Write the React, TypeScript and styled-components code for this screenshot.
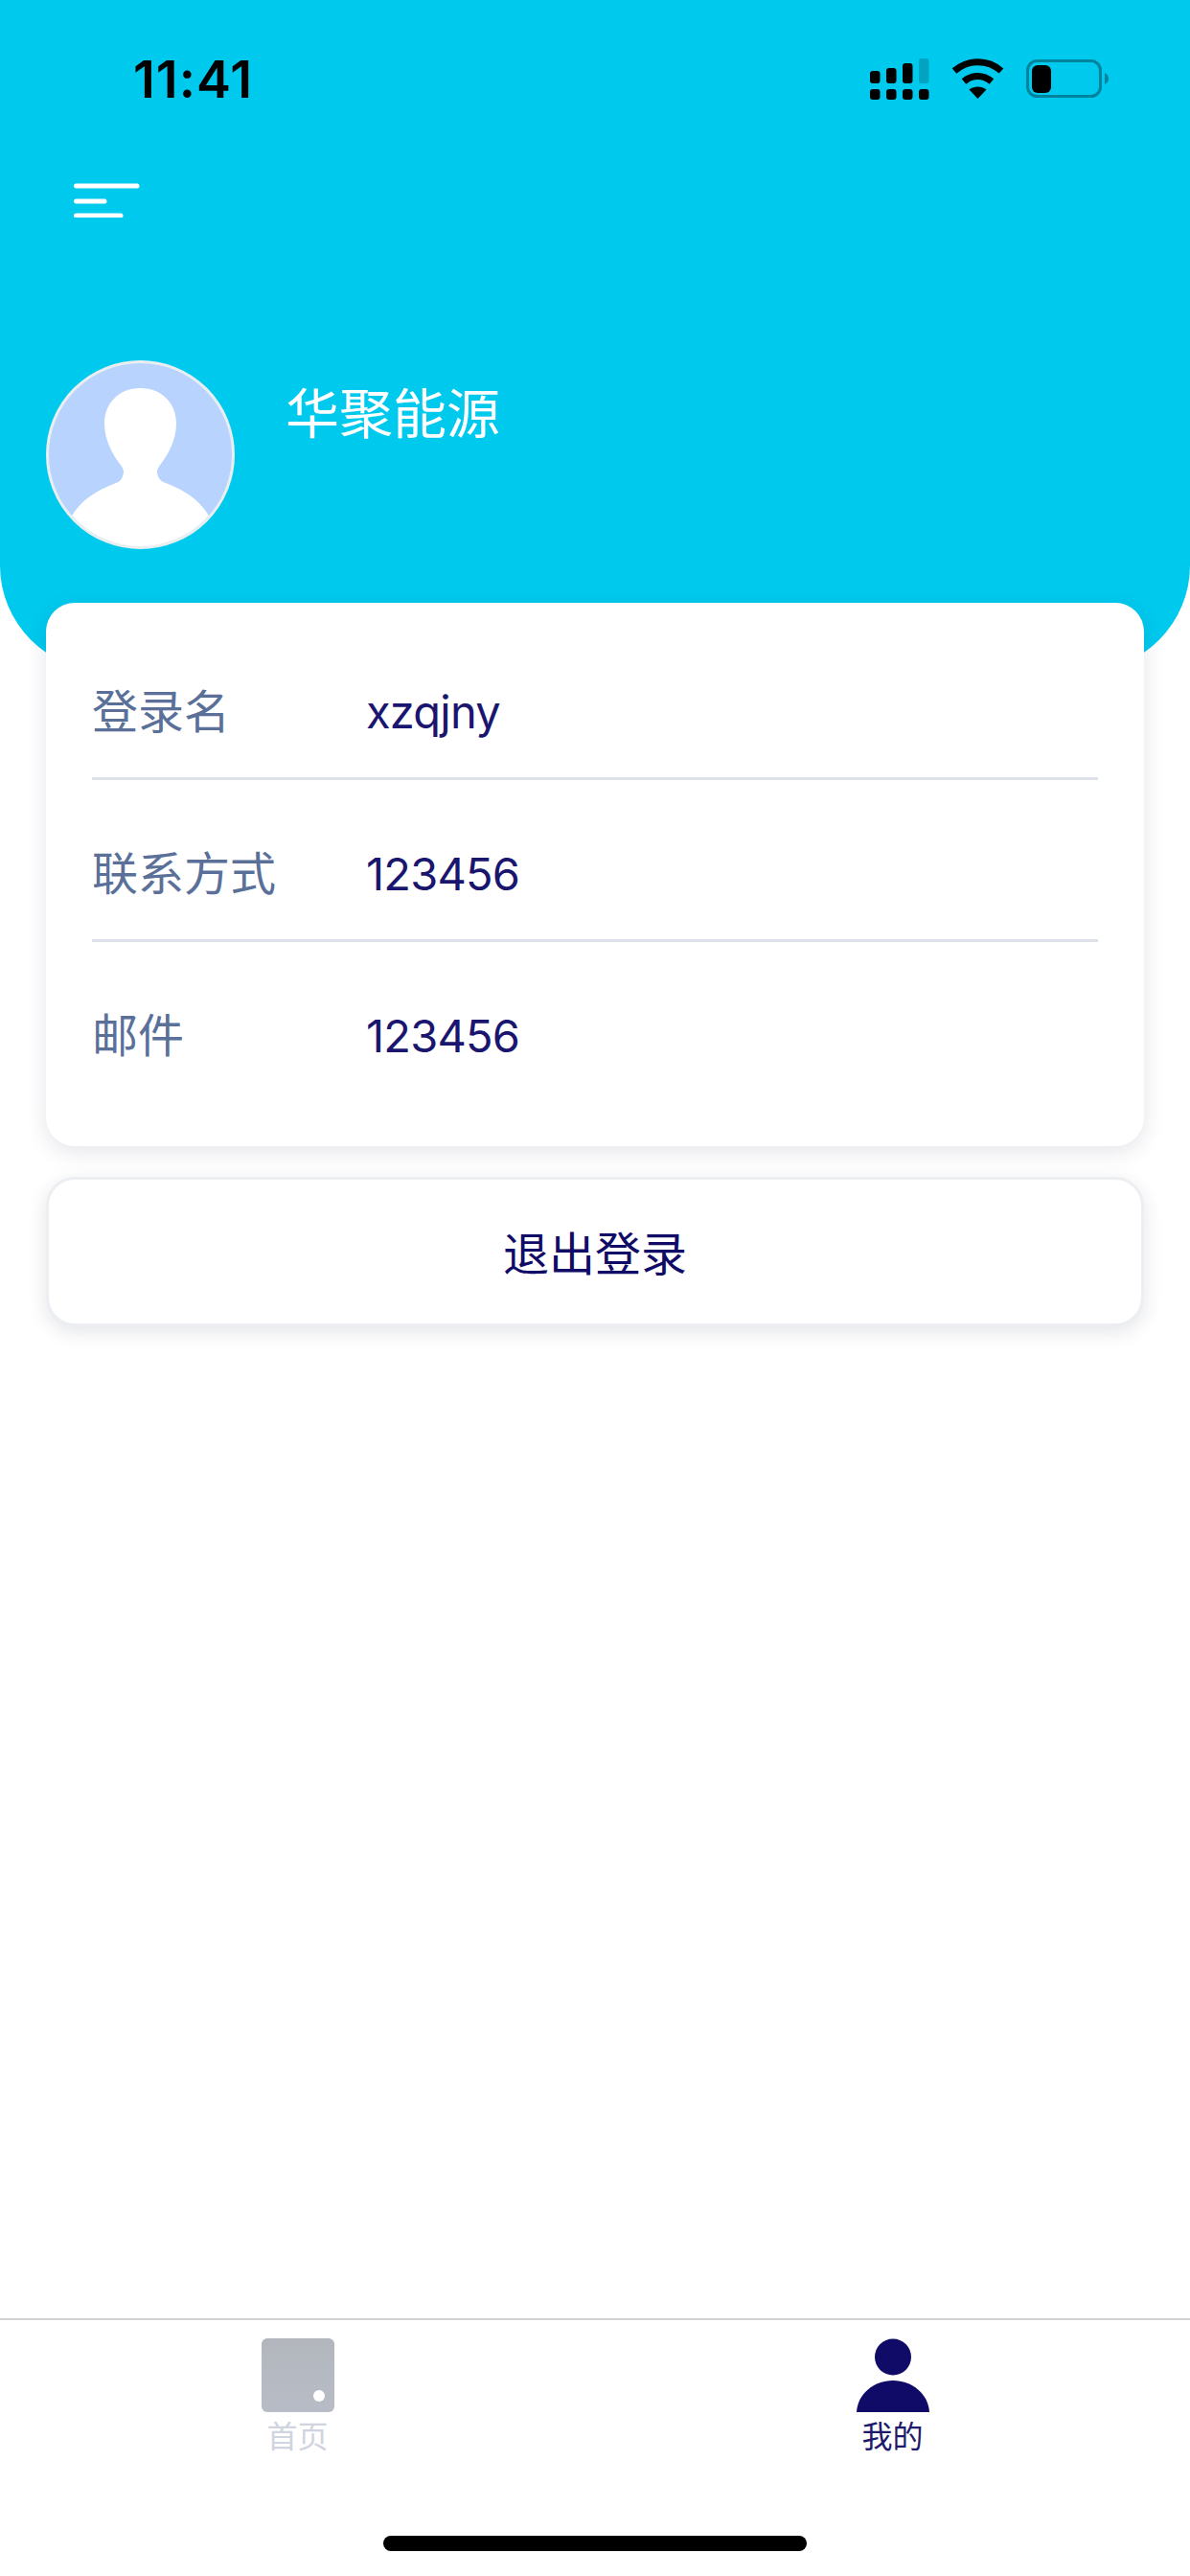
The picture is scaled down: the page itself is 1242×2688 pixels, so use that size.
import styled, { createGlobalStyle } from 'styled-components';

const FONT = `Inter, "Noto Sans CJK SC", "Noto Sans", sans-serif`;

const GlobalStyle = createGlobalStyle`
  html, body {
    margin: 0;
    padding: 0;
    background: #fff;
  }
  * {
    box-sizing: border-box;
  }
`;

const Page = styled.div`
  width: 1242px;
  height: 2688px;
  display: flex;
  flex-direction: column;
  background: #fff;
  font-family: ${FONT};
  overflow: hidden;
`;

const Header = styled.header`
  height: 700px;
  flex-shrink: 0;
  display: flex;
  flex-direction: column;
  background: #00c9ee;
  border-radius: 0 0 110px 110px;
`;

const StatusBar = styled.div`
  height: 166px;
  flex-shrink: 0;
  display: flex;
  justify-content: space-between;
  align-items: flex-start;
  padding: 52px 84px 0 139px;
`;

const Time = styled.div`
  font-size: 54px;
  line-height: 62px;
  font-weight: 600;
  letter-spacing: 1px;
  color: #000;
`;

const StatusIcons = styled.div`
  display: flex;
  padding-top: 9px;
`;

const MenuButton = styled.button`
  width: 70px;
  height: 36px;
  margin: 25px 0 0 76px;
  padding: 0;
  border: 0;
  background: none;
  display: block;
  flex-shrink: 0;
`;

const Profile = styled.div`
  display: flex;
  align-items: flex-start;
  gap: 53px;
  margin-top: 149px;
  padding-left: 48px;
`;

const Avatar = styled.div`
  width: 197px;
  height: 197px;
  border-radius: 50%;
  border: 3px solid #e9eef0;
  overflow: hidden;
  background: #b9d3ff;
  flex-shrink: 0;
`;

const AvatarSvg = styled.svg`
  display: block;
  filter: blur(0.7px);
`;

const CompanyName = styled.div`
  margin-top: 21px;
  font-size: 56px;
  line-height: 70px;
  color: #fff;
`;

const Content = styled.main`
  display: flex;
  flex-direction: column;
  gap: 32px;
  margin-top: -71px;
  padding: 0 48px;
`;

const InfoCard = styled.section`
  height: 567px;
  padding: 0 48px;
  background: #fff;
  border-radius: 30px;
  box-shadow: 0 6px 22px rgba(30, 40, 70, 0.12);
`;

const InfoRow = styled.div`
  display: flex;
  align-items: center;
  border-bottom: 3px solid #dde2ea;
`;

const FirstRow = styled(InfoRow)`
  height: 185px;
  padding-top: 46px;
`;

const MiddleRow = styled(InfoRow)`
  height: 169px;
  padding-top: 29px;
`;

const LastRow = styled(InfoRow)`
  height: 213px;
  padding-bottom: 18px;
  border-bottom: none;
`;

const Label = styled.div`
  width: 286px;
  font-size: 48px;
  line-height: 60px;
  color: #5a7099;
`;

const Value = styled.div`
  font-size: 47px;
  line-height: 60px;
  letter-spacing: -0.8px;
  color: #1a1670;
`;

const LogoutButton = styled.button`
  height: 156px;
  padding: 0 0 3px;
  border: 3px solid #eceef2;
  border-radius: 30px;
  background: #fff;
  box-shadow: 0 6px 20px rgba(30, 40, 70, 0.12);
  font-family: ${FONT};
  font-size: 48px;
  color: #100b66;
`;

const TabBar = styled.nav`
  margin-top: auto;
  height: 269px;
  display: flex;
  flex-direction: column;
  border-top: 2px solid #d2d2d4;
`;

const Tabs = styled.div`
  display: grid;
  grid-template-columns: 1fr 1fr;
  padding-top: 19px;
`;

const Tab = styled.div<{ $active?: boolean }>`
  display: flex;
  flex-direction: column;
  align-items: center;
  font-size: 32px;
  line-height: 40px;
  color: ${({ $active }) => ($active ? '#1d1a6e' : '#d0d4de')};
`;

const TabLabel = styled.span`
  margin-top: 6px;
`;

const HomeSlot = styled.div`
  width: 76px;
  height: 77px;
  position: relative;
  border-radius: 6px;
  background: linear-gradient(#b2b6bc, #b8bcc6);
`;

const HomeDot = styled.i`
  position: absolute;
  right: 10px;
  bottom: 11px;
  width: 12px;
  height: 12px;
  border-radius: 50%;
  background: #fff;
`;

const PersonSlot = styled.div`
  width: 76px;
  height: 77px;
`;

const HomeIndicator = styled.div`
  width: 442px;
  height: 16px;
  margin: 83px auto 0;
  border-radius: 8px;
  background: #000;
`;

function StatusGlyphs() {
  const bars = [
    { x: 0, y: 13, h: 13 },
    { x: 17, y: 10, h: 16 },
    { x: 34, y: 5, h: 21 },
  ];
  const dots = [0, 17, 34, 51];
  return (
    <svg width="250" height="44" viewBox="0 0 250 44">
      {bars.map((b) => (
        <rect key={b.x} x={b.x} y={b.y} width="10.5" height={b.h} rx="3" fill="#000" />
      ))}
      <rect x="51" y="0" width="10.5" height="26" rx="3" fill="#00a3c0" />
      {dots.map((x) => (
        <rect key={x} x={x} y="32" width="10.5" height="11" rx="3" fill="#000" />
      ))}
      <g transform="translate(85 2)" fill="none" stroke="#000" strokeWidth="7">
        <path d="M3 11C18 -1.5 38 -1.5 52 11" />
        <path d="M13 22C22 14.5 33 14.5 42 22" />
        <path d="M27.5 40L18.5 30.5C23.5 26.5 31.5 26.5 36.5 30.5Z" fill="#000" stroke="none" />
      </g>
      <g transform="translate(163 1)">
        <rect x="1.5" y="1.5" width="76" height="37" rx="10" fill="none" stroke="#00839c" strokeWidth="3" />
        <rect x="6" y="6" width="20" height="29" rx="6" fill="#000" />
        <path d="M82 14C85 15.5 86 17.5 86 20C86 22.5 85 24.5 82 26Z" fill="#00839c" />
      </g>
    </svg>
  );
}

function MenuGlyph() {
  return (
    <svg width="70" height="36" viewBox="0 0 70 36" fill="none" stroke="#fff" strokeWidth="5" strokeLinecap="round">
      <path d="M3.5 3H67" />
      <path d="M3.5 19H33" />
      <path d="M3.5 34H50" />
    </svg>
  );
}

function AvatarGlyph() {
  return (
    <AvatarSvg width="191" height="191" viewBox="0 0 191 191" fill="#fff">
      <path d="M95.5 26C118 26 133 42 133 63C133 80 124 96 117 105C113 110 112 113 114 118C115 121 118 124 122 125C140 132 155 141 165 156L185 191H6L26 156C36 141 52 132 70 125C74 124 76 121 77 118C79 113 78 110 74 105C67 96 58 80 58 63C58 42 73 26 95.5 26Z" />
    </AvatarSvg>
  );
}

function PersonGlyph() {
  return (
    <svg width="76" height="77" viewBox="0 0 76 77" fill="#100b66">
      <circle cx="38" cy="19.5" r="19" />
      <path d="M0 77C1 58 18 44 38 44C58 44 75 58 76 77Z" />
    </svg>
  );
}

export default function App() {
  return (
    <Page>
      <GlobalStyle />
      <Header>
        <StatusBar>
          <Time>11:41</Time>
          <StatusIcons>
            <StatusGlyphs />
          </StatusIcons>
        </StatusBar>
        <MenuButton type="button" aria-label="菜单">
          <MenuGlyph />
        </MenuButton>
        <Profile>
          <Avatar>
            <AvatarGlyph />
          </Avatar>
          <CompanyName>华聚能源</CompanyName>
        </Profile>
      </Header>

      <Content>
        <InfoCard>
          <FirstRow>
            <Label>登录名</Label>
            <Value>xzqjny</Value>
          </FirstRow>
          <MiddleRow>
            <Label>联系方式</Label>
            <Value>123456</Value>
          </MiddleRow>
          <LastRow>
            <Label>邮件</Label>
            <Value>123456</Value>
          </LastRow>
        </InfoCard>
        <LogoutButton type="button">退出登录</LogoutButton>
      </Content>

      <TabBar>
        <Tabs>
          <Tab>
            <HomeSlot>
              <HomeDot />
            </HomeSlot>
            <TabLabel>首页</TabLabel>
          </Tab>
          <Tab $active>
            <PersonSlot>
              <PersonGlyph />
            </PersonSlot>
            <TabLabel>我的</TabLabel>
          </Tab>
        </Tabs>
        <HomeIndicator />
      </TabBar>
    </Page>
  );
}
